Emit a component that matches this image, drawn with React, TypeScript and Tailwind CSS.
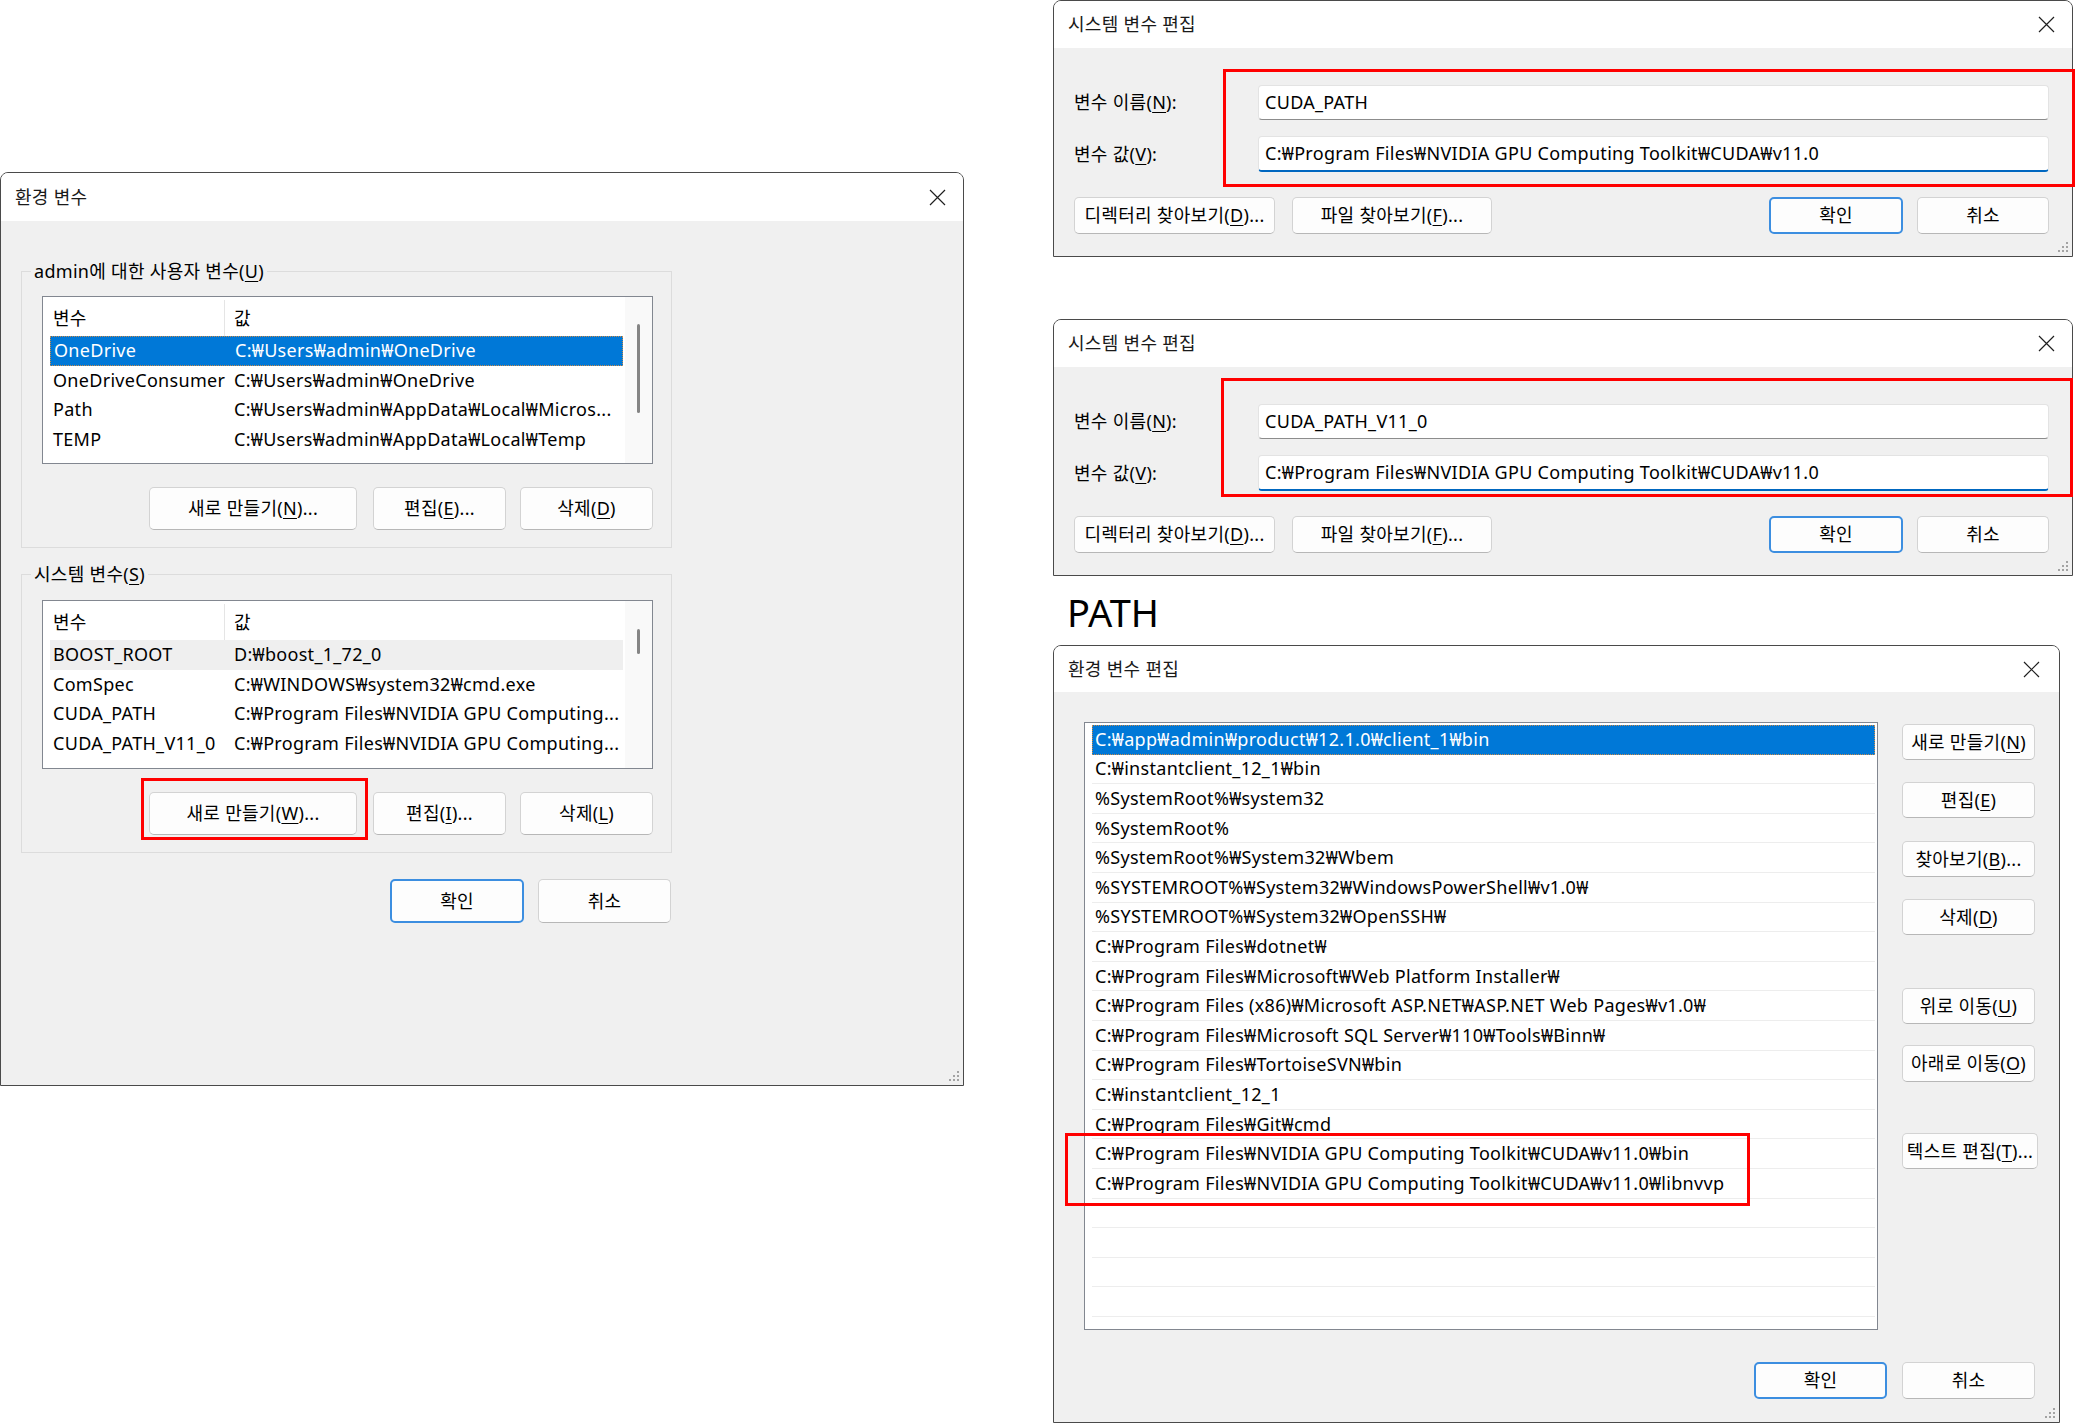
import React from "react";

const FONT = "font-['Noto_Sans','Noto_Sans_CJK_KR',sans-serif]";

function Key({ k }: { k: string }) {
  return <span className="underline decoration-1 underline-offset-[3px]">{k}</span>;
}

function CloseIcon() {
  return (
    <svg width="17" height="17" viewBox="0 0 17 17" className="shrink-0">
      <path d="M1 1L16 16M16 1L1 16" stroke="#1f1f1f" strokeWidth="1.2" fill="none" />
    </svg>
  );
}

function Grip() {
  const dots = [
    [9, 1],
    [9, 5],
    [5, 5],
    [9, 9],
    [5, 9],
    [1, 9],
  ];
  return (
    <svg width="12" height="12" viewBox="0 0 12 12" className="absolute bottom-[3px] right-[3px]">
      {dots.map(([x, y]) => (
        <rect key={`${x}-${y}`} x={x} y={y} width="2" height="2" fill="#a3a3a3" />
      ))}
    </svg>
  );
}

function Button({
  children,
  className = "",
  primary = false,
}: {
  children: React.ReactNode;
  className?: string;
  primary?: boolean;
}) {
  return (
    <div
      className={`flex shrink-0 items-center justify-center whitespace-nowrap rounded-[5px] bg-[#fdfdfd] ${
        primary ? "border-2 border-[#3c8ee0]" : "border border-[#d3d3d3] border-b-[#b7b7b7]"
      } ${className}`}
    >
      {children}
    </div>
  );
}

function TitleBar({ title, className = "" }: { title: string; className?: string }) {
  return (
    <div
      className={`flex shrink-0 items-center justify-between rounded-t-[7px] bg-white pl-[14px] pr-[17px] text-[#1a1a1a] ${className}`}
    >
      <span>{title}</span>
      <CloseIcon />
    </div>
  );
}

function RedBox({ className }: { className: string }) {
  return <div className={`pointer-events-none absolute border-[3px] border-[#ff0000] ${className}`} />;
}

type VarRow = { name: string; value: string; state?: "sel" | "hover" };

function VarList({ rows, className, thumb }: { rows: VarRow[]; className: string; thumb: string }) {
  return (
    <div className={`flex w-full overflow-hidden border border-[#828790] bg-white ${className}`}>
      <div className="flex min-w-0 flex-1 flex-col pl-[7px] pr-[2px] pt-[3px]">
        <div className="flex h-[36px] shrink-0 items-center">
          <div className="flex h-full w-[175px] shrink-0 items-center border-r border-[#e5e5e5] pl-[3px]">변수</div>
          <div className="pl-[9px]">값</div>
        </div>
        {rows.map((r) => (
          <div
            key={r.name}
            className={`flex h-[29.5px] shrink-0 items-center whitespace-nowrap ${
              r.state === "sel"
                ? "border border-dotted border-[#c98b4b] bg-[#0078d7] text-white"
                : r.state === "hover"
                  ? "bg-[#efefef]"
                  : ""
            }`}
          >
            <div className="w-[175px] shrink-0 pl-[3px]">{r.name}</div>
            <div className="min-w-0 flex-1 truncate pl-[9px]">{r.value}</div>
          </div>
        ))}
      </div>
      <div className="flex w-[27px] shrink-0 justify-center bg-[#f9f9f9]">
        <div className={`w-[3px] rounded-full bg-[#858585] ${thumb}`} />
      </div>
    </div>
  );
}

function EnvDialog() {
  const user: VarRow[] = [
    { name: "OneDrive", value: "C:₩Users₩admin₩OneDrive", state: "sel" },
    { name: "OneDriveConsumer", value: "C:₩Users₩admin₩OneDrive" },
    { name: "Path", value: "C:₩Users₩admin₩AppData₩Local₩Micros..." },
    { name: "TEMP", value: "C:₩Users₩admin₩AppData₩Local₩Temp" },
  ];
  const sys: VarRow[] = [
    { name: "BOOST_ROOT", value: "D:₩boost_1_72_0", state: "hover" },
    { name: "ComSpec", value: "C:₩WINDOWS₩system32₩cmd.exe" },
    { name: "CUDA_PATH", value: "C:₩Program Files₩NVIDIA GPU Computing..." },
    { name: "CUDA_PATH_V11_0", value: "C:₩Program Files₩NVIDIA GPU Computing..." },
  ];
  return (
    <div className="relative flex h-[914px] w-[964px] flex-col rounded-t-[8px] border border-[#4a4a4a] bg-[#f0f0f0]">
      <TitleBar title="환경 변수" className="h-[48px] pr-[15px]" />
      <div className="flex w-[672px] flex-col pl-[20px]">
        <fieldset className="mt-[37px] w-[651px] border border-[#dcdcdc]">
          <legend className="ml-[9px] px-[3px] leading-[26px]">
            admin에 대한 사용자 변수(<Key k="U" />)
          </legend>
          <div className="flex flex-col pb-[17px] pl-[20px] pr-[18px]">
            <VarList rows={user} className="mt-[12px] h-[168px]" thumb="mt-[27px] h-[89px]" />
            <div className="mt-[23px] flex justify-end">
              <Button className="h-[43px] w-[208px]">
                새로 만들기(<Key k="N" />)...
              </Button>
              <Button className="ml-[16px] h-[43px] w-[133px]">
                편집(<Key k="E" />)...
              </Button>
              <Button className="ml-[14px] h-[43px] w-[133px]">
                삭제(<Key k="D" />)
              </Button>
            </div>
          </div>
        </fieldset>
        <fieldset className="mt-[13px] w-[651px] border border-[#dcdcdc]">
          <legend className="ml-[9px] px-[3px] leading-[26px]">
            시스템 변수(<Key k="S" />)
          </legend>
          <div className="flex flex-col pb-[17px] pl-[20px] pr-[18px]">
            <VarList rows={sys} className="mt-[13px] h-[169px]" thumb="mt-[28px] h-[25px]" />
            <div className="mt-[23px] flex justify-end">
              <Button className="h-[43px] w-[208px]">
                새로 만들기(<Key k="W" />)...
              </Button>
              <Button className="ml-[16px] h-[43px] w-[133px]">
                편집(<Key k="I" />)...
              </Button>
              <Button className="ml-[14px] h-[43px] w-[133px]">
                삭제(<Key k="L" />)
              </Button>
            </div>
          </div>
        </fieldset>
        <div className="mt-[26px] flex justify-end pr-[2px]">
          <Button primary className="h-[44px] w-[134px]">
            확인
          </Button>
          <Button className="ml-[14px] h-[44px] w-[133px]">취소</Button>
        </div>
      </div>
      <Grip />
      <RedBox className="left-[140px] top-[605px] h-[62px] w-[227px]" />
    </div>
  );
}

function EditVarDialog({ name, red }: { name: string; red: string }) {
  return (
    <div className="relative flex h-[257px] w-[1020px] shrink-0 flex-col rounded-t-[8px] border border-[#4a4a4a] bg-[#f0f0f0]">
      <TitleBar title="시스템 변수 편집" className="h-[47px]" />
      <div className="flex flex-col pl-[20px] pr-[23px] pt-[37px]">
        <div className="flex items-center">
          <div className="w-[184px] shrink-0">
            변수 이름(<Key k="N" />):
          </div>
          <div className="flex h-[35px] flex-1 items-center rounded-[4px] border border-[#e3e3e3] border-b-[#8c8c8c] bg-white pl-[6px]">
            {name}
          </div>
        </div>
        <div className="mt-[16px] flex items-center">
          <div className="w-[184px] shrink-0">
            변수 값(<Key k="V" />):
          </div>
          <div className="flex h-[36px] flex-1 items-center rounded-[4px] border border-[#e3e3e3] border-b-2 border-b-[#0067c0] bg-white pl-[6px]">
            C:₩Program Files₩NVIDIA GPU Computing Toolkit₩CUDA₩v11.0
          </div>
        </div>
        <div className="mt-[25px] flex items-center">
          <Button className="h-[37px] w-[201px]">
            디렉터리 찾아보기(<Key k="D" />)...
          </Button>
          <Button className="ml-[17px] h-[37px] w-[200px]">
            파일 찾아보기(<Key k="F" />)...
          </Button>
          <Button primary className="ml-auto h-[37px] w-[134px]">
            확인
          </Button>
          <Button className="ml-[14px] h-[37px] w-[132px]">취소</Button>
        </div>
      </div>
      <Grip />
      <RedBox className={red} />
    </div>
  );
}

const PATHS = [
  "C:₩app₩admin₩product₩12.1.0₩client_1₩bin",
  "C:₩instantclient_12_1₩bin",
  "%SystemRoot%₩system32",
  "%SystemRoot%",
  "%SystemRoot%₩System32₩Wbem",
  "%SYSTEMROOT%₩System32₩WindowsPowerShell₩v1.0₩",
  "%SYSTEMROOT%₩System32₩OpenSSH₩",
  "C:₩Program Files₩dotnet₩",
  "C:₩Program Files₩Microsoft₩Web Platform Installer₩",
  "C:₩Program Files (x86)₩Microsoft ASP.NET₩ASP.NET Web Pages₩v1.0₩",
  "C:₩Program Files₩Microsoft SQL Server₩110₩Tools₩Binn₩",
  "C:₩Program Files₩TortoiseSVN₩bin",
  "C:₩instantclient_12_1",
  "C:₩Program Files₩Git₩cmd",
  "C:₩Program Files₩NVIDIA GPU Computing Toolkit₩CUDA₩v11.0₩bin",
  "C:₩Program Files₩NVIDIA GPU Computing Toolkit₩CUDA₩v11.0₩libnvvp",
  "",
  "",
  "",
  "",
  "",
];

function PathDialog() {
  return (
    <div className="relative flex h-[778px] w-[1007px] shrink-0 flex-col rounded-t-[8px] border border-[#4a4a4a] bg-[#f0f0f0]">
      <TitleBar title="환경 변수 편집" className="h-[46px] pr-[19px]" />
      <div className="flex pl-[30px] pt-[30px]">
        <div className="flex h-[608px] w-[794px] shrink-0 flex-col overflow-hidden border border-[#828790] bg-white pl-[7px] pr-[2px] pt-[2px]">
          {PATHS.map((p, i) =>
            i === 0 ? (
              <div
                key={i}
                className="flex h-[29.6px] shrink-0 items-center whitespace-nowrap border border-dotted border-[#c98b4b] bg-[#0078d7] pl-[2px] text-white"
              >
                {p}
              </div>
            ) : (
              <div
                key={i}
                className="flex h-[29.6px] shrink-0 items-center whitespace-nowrap border-b border-[#ededed] pl-[3px]"
              >
                {p}
              </div>
            ),
          )}
        </div>
        <div className="ml-[24px] flex flex-col pt-[2px]">
          <Button className="h-[36px] w-[133px]">
            새로 만들기(<Key k="N" />)
          </Button>
          <Button className="mt-[22px] h-[36px] w-[133px]">
            편집(<Key k="E" />)
          </Button>
          <Button className="mt-[23px] h-[36px] w-[133px]">
            찾아보기(<Key k="B" />)...
          </Button>
          <Button className="mt-[22px] h-[36px] w-[133px]">
            삭제(<Key k="D" />)
          </Button>
          <Button className="mt-[53px] h-[36px] w-[133px]">
            위로 이동(<Key k="U" />)
          </Button>
          <Button className="mt-[21px] h-[37px] w-[133px]">
            아래로 이동(<Key k="O" />)
          </Button>
          <Button className="mt-[51px] h-[36px] w-[136px]">
            텍스트 편집(<Key k="T" />)...
          </Button>
        </div>
      </div>
      <div className="mt-[32px] flex justify-end pr-[24px]">
        <Button primary className="h-[37px] w-[133px]">
          확인
        </Button>
        <Button className="ml-[15px] h-[37px] w-[133px]">취소</Button>
      </div>
      <Grip />
      <RedBox className="left-[11px] top-[487px] h-[73px] w-[685px]" />
    </div>
  );
}

export default function App() {
  return (
    <div
      className={`flex h-[1426px] w-[2077px] overflow-hidden bg-white text-[18px] tracking-[0.3px] text-black ${FONT}`}
    >
      <div className="w-[964px] shrink-0 pt-[172px]">
        <EnvDialog />
      </div>
      <div className="ml-[89px] flex w-[1024px] shrink-0 flex-col">
        <EditVarDialog name="CUDA_PATH" red="left-[169px] top-[68px] h-[118px] w-[852px]" />
        <div className="mt-[62px]">
          <EditVarDialog name="CUDA_PATH_V11_0" red="left-[167px] top-[58px] h-[119px] w-[852px]" />
        </div>
        <div className="mt-[17px] h-[38px] pl-[14px] text-[38px] leading-[38px] tracking-normal">PATH</div>
        <div className="mt-[14px]">
          <PathDialog />
        </div>
      </div>
    </div>
  );
}
